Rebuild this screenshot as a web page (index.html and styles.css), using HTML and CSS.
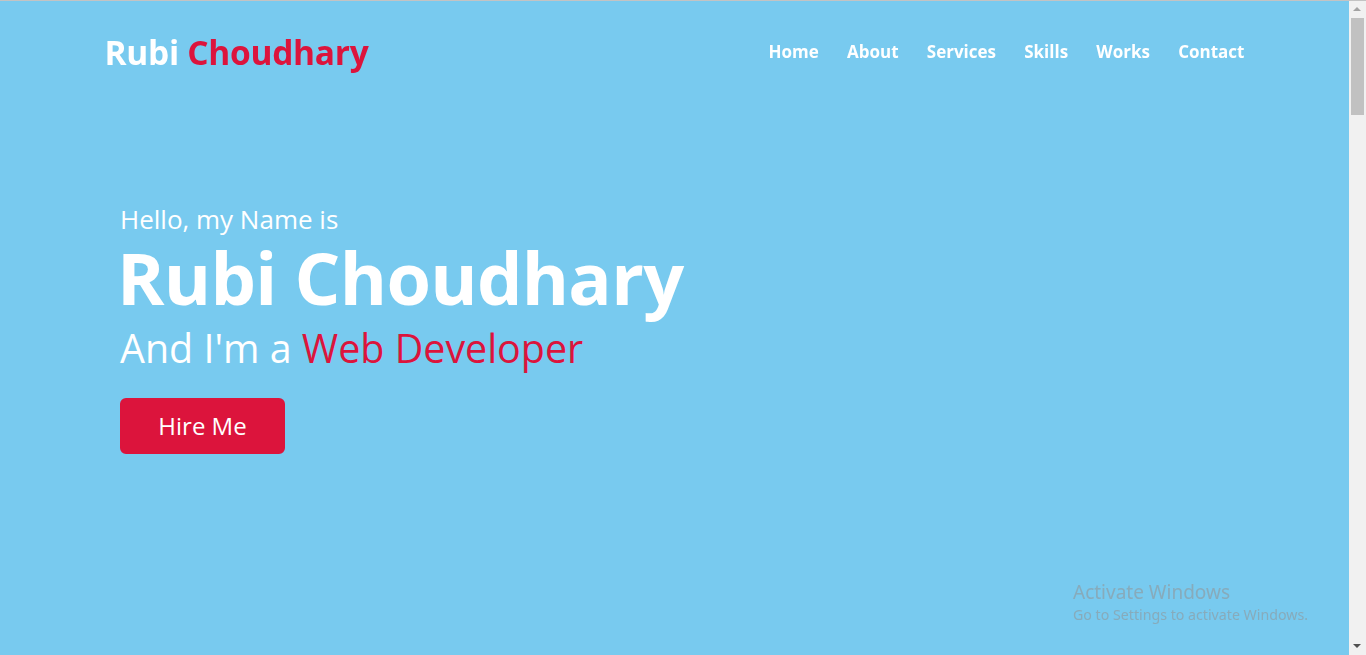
FILE: index.html
```html
<!DOCTYPE html>
<html lang="en">
<head>
<meta charset="utf-8">
<title>Rubi Choudhary</title>
<link rel="stylesheet" href="styles.css">
</head>
<body>
<div class="page">
  <nav class="navbar">
    <div class="max-width nav-row">
      <div class="logo"><a href="#">Rubi <span>Choudhary</span></a></div>
      <ul class="menu">
        <li><a href="#">Home</a></li>
        <li><a href="#">About</a></li>
        <li><a href="#">Services</a></li>
        <li><a href="#">Skills</a></li>
        <li><a href="#">Works</a></li>
        <li><a href="#">Contact</a></li>
      </ul>
    </div>
  </nav>
  <section class="home">
    <div class="home-wrap">
      <div class="home-content">
        <div class="text-1">Hello, my Name is</div>
        <div class="text-2">Rubi Choudhary</div>
        <div class="text-3">And I'm a <span>Web Developer</span></div>
        <a class="hire" href="#">Hire Me</a>
      </div>
    </div>
  </section>
  <section class="rest"></section>
</div>
<div class="top-line"></div>
<div class="scrollbar">
  <div class="sb-up"></div>
  <div class="sb-thumb"></div>
  <div class="sb-down"></div>
</div>
<div class="watermark">
  <div class="wm-1">Activate Windows</div>
  <div class="wm-2">Go to Settings to activate Windows.</div>
</div>
</body>
</html>
```
FILE: styles.css
```css
* { margin: 0; padding: 0; box-sizing: border-box; }
html, body { overflow: hidden; height: 100%; }
body {
  font-family: "Open Sans", "Noto Sans", sans-serif;
  background: #78caef;
  color: #fff;
}
a { text-decoration: none; color: inherit; }
ul { list-style: none; }

.page { width: calc(100% - 17px); }

.max-width {
  max-width: 1300px;
  padding: 0 80px;
  margin: 0 auto;
}

.navbar {
  position: fixed;
  top: 0; left: 0; right: 17px;
  padding: 30px 0;
  z-index: 10;
}
.nav-row {
  display: flex;
  align-items: center;
  justify-content: space-between;
}
.logo a {
  font-size: 33.5px;
  font-weight: 700;
  line-height: 44px;
  color: #fff;
  letter-spacing: -0.3px;
}
.logo a span { color: crimson; }
.menu { display: flex; }
.menu li a {
  display: block;
  margin-left: 28.2px;
  font-size: 17px;
  font-weight: 700;
  color: #fff;
  line-height: 44px;
}

.home {
  height: 655px;
  padding-top: 2px;
  display: flex;
  align-items: center;
}
.home-wrap {
  width: 100%;
  max-width: 1300px;
  margin-left: 40px;
  padding: 0 80px;
}
.home-content { display: flex; flex-direction: column; align-items: flex-start; }
.text-1 { font-size: 26px; line-height: 30px; }
.text-2 { font-size: 72px; font-weight: 700; line-height: 86px; margin-left: -3px; letter-spacing: -0.7px; }
.text-3 { font-size: 39.4px; line-height: 46px; margin: 5px 0; }
.text-3 span { color: crimson; }
.hire {
  margin-top: 22px;
  background: crimson;
  color: #fff;
  font-size: 24px;
  line-height: 52px;
  width: 165px;
  text-align: center;
  border: 2px solid crimson;
  border-radius: 6px;
}

.rest { height: 3540px; }

.top-line {
  position: fixed;
  top: 0; left: 0; right: 0;
  height: 1px;
  background: #c3c3c3;
  z-index: 30;
}
.scrollbar {
  position: fixed;
  top: 0; right: 0;
  width: 17px;
  height: 100%;
  background: #f1f1f1;
  z-index: 25;
}
.sb-up, .sb-down {
  position: absolute;
  left: 4px;
  width: 0; height: 0;
  border-left: 4.5px solid transparent;
  border-right: 4.5px solid transparent;
}
.sb-up { top: 7px; border-bottom: 4.5px solid #a3a3a3; }
.sb-down { bottom: 7px; border-top: 4.5px solid #505050; }
.sb-thumb {
  position: absolute;
  top: 18px;
  left: 2px;
  width: 13px;
  height: 97px;
  background: #c1c1c1;
}

.watermark {
  position: fixed;
  left: 1073px;
  top: 580px;
  font-family: "Segoe UI", "Noto Sans", sans-serif;
  color: rgba(140, 160, 170, 0.75);
  z-index: 20;
}
.wm-1 { font-size: 19px; line-height: 24px; }
.wm-2 { font-size: 14.2px; line-height: 20px; margin-top: 1px; }
```
